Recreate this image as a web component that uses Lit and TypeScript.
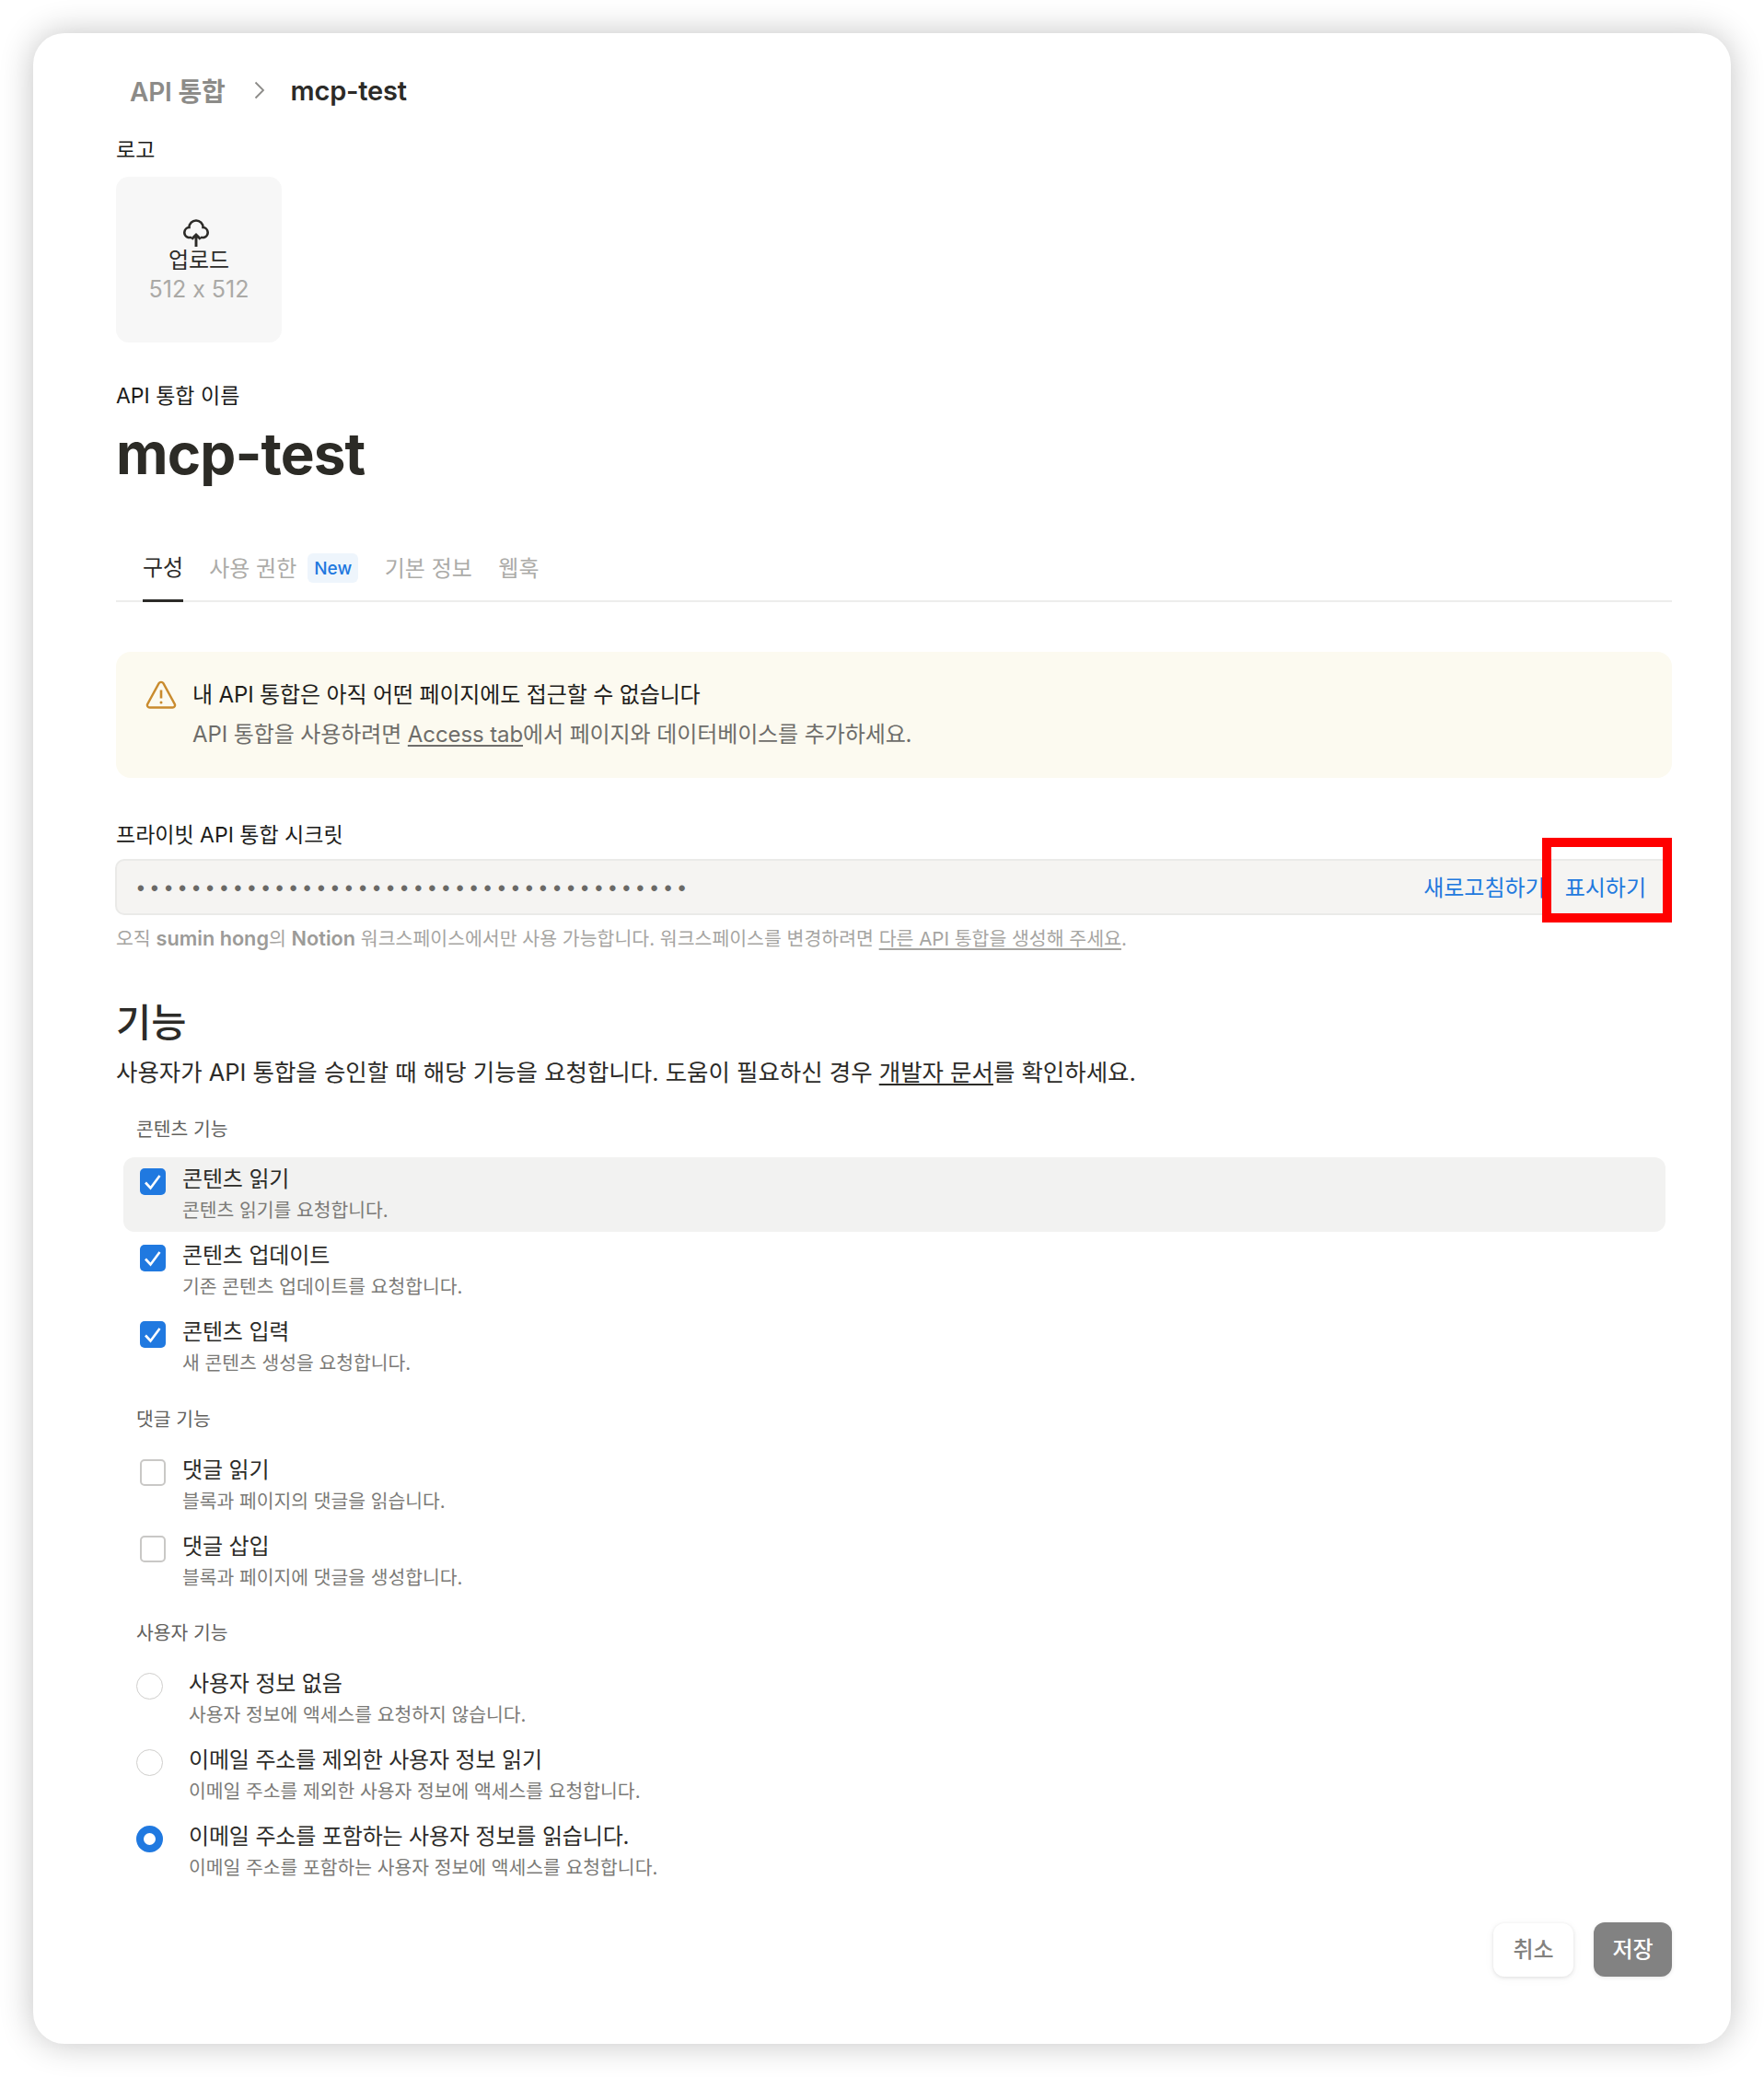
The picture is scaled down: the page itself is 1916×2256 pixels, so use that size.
import { LitElement, html, css } from "lit";
import { customElement } from "lit/decorators.js";

const check = html`<svg viewBox="0 0 28 29" width="28" height="29"><path d="M6 15.5l5.5 6L21.5 8" fill="none" stroke="#fff" stroke-width="2.6"/></svg>`;

const groups = [
  { label: "콘텐츠 기능", kind: "check", gap: "g1", items: [
    ["콘텐츠 읽기", "콘텐츠 읽기를 요청합니다.", true, true],
    ["콘텐츠 업데이트", "기존 콘텐츠 업데이트를 요청합니다.", true, false],
    ["콘텐츠 입력", "새 콘텐츠 생성을 요청합니다.", true, false],
  ]},
  { label: "댓글 기능", kind: "check", gap: "g2", items: [
    ["댓글 읽기", "블록과 페이지의 댓글을 읽습니다.", false, false],
    ["댓글 삽입", "블록과 페이지에 댓글을 생성합니다.", false, false],
  ]},
  { label: "사용자 기능", kind: "radio", gap: "g3", items: [
    ["사용자 정보 없음", "사용자 정보에 액세스를 요청하지 않습니다.", false, false],
    ["이메일 주소를 제외한 사용자 정보 읽기", "이메일 주소를 제외한 사용자 정보에 액세스를 요청합니다.", false, false],
    ["이메일 주소를 포함하는 사용자 정보를 읽습니다.", "이메일 주소를 포함하는 사용자 정보에 액세스를 요청합니다.", true, false],
  ]},
];

@customElement("app-root")
export class AppRoot extends LitElement {
  static styles = css`
    :host { display: block; width: 1916px; height: 2256px; background: #fff; overflow: hidden;
      font-family: Inter, "Noto Sans CJK KR", sans-serif; color: #2c2b28; font-feature-settings: "calt" 0; }
    * { box-sizing: border-box; }
    .page { padding: 36px; }
    .card { width: 1844px; height: 2184px; background: #fff; border-radius: 34px;
      box-shadow: 0 0 36px rgba(0,0,0,.24); padding: 42px 64px 0 90px; }
    .crumbs { display: flex; align-items: center; height: 40px; padding-left: 15px; font-size: 29px; font-weight: 600; letter-spacing: -.2px; }
    .crumbs .root { color: #8c8b88; font-size: 28px; }
    .crumbs svg { margin: 0 28px 0 31px; }
    .field { display: flex; align-items: center; height: 24px; font-size: 23px; color: #1b1b19; }
    .logo-label { margin-top: 31px; }
    .logo { margin-top: 19px; width: 180px; height: 180px; background: #f7f7f7; border-radius: 14px;
      display: flex; flex-direction: column; align-items: center; padding-top: 46px; }
    .logo svg { margin-left: -7px; }
    .logo .up { font-size: 24px; line-height: 28px; color: #2c2b28; margin-top: 1px; }
    .logo .size { font-size: 25px; line-height: 34px; color: #aaa9a6; }
    .name-label { margin-top: 44px; }
    h1 { margin: 13px 0 0; height: 80px; line-height: 80px; font-size: 62px; font-weight: 700; letter-spacing: -.9px; color: #2c2b26; }
    .tabs { margin-top: 57px; height: 64px; border-bottom: 2px solid #ededec; display: flex; padding-left: 29px; font-size: 24px; color: #acaba8; }
    .tab { height: 62px; display: flex; align-items: center; padding-bottom: 11px; margin-right: 28.5px; }
    .tab.on { color: #2c2b28; margin-right: 28px; border-bottom: 3px solid #2c2b28; height: 64px; padding-bottom: 12px; }
    .badge { margin: 3px 0 0 12px; height: 32px; padding: 0 7px; display: flex; align-items: center; background: #eef5fc; color: #1f78df; border-radius: 6px; font-size: 19px; font-weight: 500; }
    .banner { margin-top: 54px; height: 137px; background: #fcfaf0; border-radius: 16px; padding: 31px 0 0 31px; display: flex; }
    .banner svg { flex: none; margin-right: 16px; }
    .banner .t { height: 30px; line-height: 30px; font-size: 24px; color: #1e1d1b; letter-spacing: -.14px; padding-top: 1px; }
    .banner .s { height: 30px; line-height: 30px; margin-top: 14px; font-size: 24px; color: #6e6d6a; letter-spacing: -.1px; }
    .banner u, .help u, .desc u { text-underline-offset: 3px; }
    .secret-label { margin-top: 48px; }
    .input { margin: 16px 0 0 -1px; height: 61px; background: #f5f4f2; border: 2px solid #eaeae8; border-radius: 10px; display: flex; align-items: center; padding: 0 0 0 22px; position: relative; }
    .dots { flex: 1; font-size: 22px; letter-spacing: 7.37px; color: #6a6966; line-height: 1; font-weight: 700; font-family: "Liberation Sans", sans-serif; padding-top: 2px; }
    .act { color: #2279de; font-size: 24px; padding-bottom: 3px; }
    .act.a { margin-right: 21px; }
    .act.b { margin-right: 26px; }
    .mark { position: absolute; right: -2px; top: -25px; width: 141px; height: 92px; border: 10px solid #ff0000; }
    .help { margin-top: 13px; height: 24px; line-height: 24px; font-size: 20.5px; color: #a6a5a2; }
    .help b { font-weight: 600; color: #9c9b98; font-size: 21.7px; }
    h2 { margin: 55px 0 0; height: 50px; line-height: 50px; font-size: 41.5px; font-weight: 500; color: #2c2b28; }
    .desc { margin-top: 13px; height: 32px; line-height: 32px; font-size: 25.45px; color: #2c2b28; }
    .glabel { padding-left: 22px; height: 24px; line-height: 24px; font-size: 20.4px; color: #62615e; }
    .g1 { margin-top: 34px; }
    .g2 { margin-top: 26px; }
    .g3 { margin-top: 25px; }
    .rows { display: flex; flex-direction: column; gap: 2px; }
    .g1 + .rows { margin-top: 18px; }
    .g2 + .rows { margin-top: 19px; }
    .g3 + .rows { margin-top: 19px; }
    .row { height: 81px; width: 1675px; margin-left: 8px; border-radius: 12px; display: flex; padding: 12px 0 0 18px; }
    .row.hl { background: #f2f2f1; }
    .box { flex: none; width: 28px; height: 29px; border-radius: 5px; margin-right: 18px; display: block; }
    .box.on { background: #2079e0; }
    .box.off { border: 2px solid #c9c8c6; }
    .radio { flex: none; width: 29px; height: 29px; border-radius: 50%; margin: 0 28px 0 -4px; }
    .radio.off { border: 1.5px solid #cfcecc; }
    .radio.on { border: 8.5px solid #2079e0; }
    .txt { padding-top: 1px; }
    .rt { height: 22px; line-height: 22px; font-size: 24px; color: #2c2b28; letter-spacing: -.15px; }
    .rd { height: 22px; line-height: 22px; margin-top: 12px; font-size: 20.4px; color: #7b7a77; }
    .foot { margin-top: 36px; display: flex; justify-content: flex-end; align-items: flex-end; gap: 22px; }
    .btn { display: flex; align-items: center; justify-content: center; font-size: 24px; border-radius: 12px; padding-bottom: 5px; }
    .cancel { width: 87px; height: 58px; background: #fff; color: #82817e; box-shadow: 0 1px 4px rgba(0,0,0,.12), 0 2px 14px rgba(0,0,0,.03); font-weight: 500; }
    .save { width: 85px; height: 59px; background: #828282; color: #fff; box-shadow: 0 1px 4px rgba(0,0,0,.1); font-weight: 500; }
  `;

  render() {
    return html`<div class="page"><div class="card">
      <div class="crumbs"><span class="root">API 통합</span>
        <svg width="12" height="20" viewBox="0 0 12 20"><path d="M1.5 1.5L10 10l-8.5 8.5" fill="none" stroke="#8c8b88" stroke-width="1.8"/></svg>
        <span>mcp-test</span></div>
      <div class="field logo-label">로고</div>
      <div class="logo">
        <svg width="30" height="30" viewBox="0 0 30 30" fill="none" stroke="#2c2b28" stroke-width="2.6">
          <path d="M10 20H6.5A5.6 5.6 0 0 1 7.5 9A7.5 7.5 0 0 1 22.5 9A5.6 5.6 0 0 1 23.5 20H20"/>
          <path d="M15 30V17M10.2 21.8l4.8-4.8 4.8 4.8" stroke-width="2.9"/>
        </svg>
        <div class="up">업로드</div>
        <div class="size">512 x 512</div>
      </div>
      <div class="field name-label">API 통합 이름</div>
      <h1>mcp-test</h1>
      <div class="tabs">
        <div class="tab on">구성</div>
        <div class="tab">사용 권한<span class="badge">New</span></div>
        <div class="tab">기본 정보</div>
        <div class="tab">웹훅</div>
      </div>
      <div class="banner">
        <svg width="36" height="32" viewBox="0 0 36 32" fill="none" stroke="#c98b2e" stroke-width="2.4" stroke-linejoin="round">
          <path d="M15.6 3.2a2.8 2.8 0 0 1 4.8 0l12.4 22.6a2.6 2.6 0 0 1-2.4 3.7H5.6a2.6 2.6 0 0 1-2.4-3.7z"/>
          <path d="M18 10.5v9" stroke-width="2.6"/><circle cx="18" cy="24" r="1.5" fill="#c98b2e" stroke="none"/>
        </svg>
        <div>
          <div class="t">내 API 통합은 아직 어떤 페이지에도 접근할 수 없습니다</div>
          <div class="s">API 통합을 사용하려면 <u>Access tab</u>에서 페이지와 데이터베이스를 추가하세요.</div>
        </div>
      </div>
      <div class="field secret-label">프라이빗 API 통합 시크릿</div>
      <div class="input">
        <div class="dots">${"•".repeat(40)}</div>
        <span class="act a">새로고침하기</span><span class="act b">표시하기</span>
        <div class="mark"></div>
      </div>
      <div class="help">오직 <b>sumin hong</b>의 <b>Notion</b> 워크스페이스에서만 사용 가능합니다. 워크스페이스를 변경하려면 <u>다른 API 통합을 생성해 주세요</u>.</div>
      <h2>기능</h2>
      <div class="desc">사용자가 API 통합을 승인할 때 해당 기능을 요청합니다. 도움이 필요하신 경우 <u>개발자 문서</u>를 확인하세요.</div>
      ${groups.map((g) => html`
        <div class="glabel ${g.gap}">${g.label}</div>
        <div class="rows">${g.items.map(([t, d, on, hl]) => html`
          <div class="row ${hl ? "hl" : ""}">
            ${g.kind === "check"
              ? html`<span class="box ${on ? "on" : "off"}">${on ? check : ""}</span>`
              : html`<span class="radio ${on ? "on" : "off"}"></span>`}
            <div class="txt"><div class="rt">${t}</div><div class="rd">${d}</div></div>
          </div>`)}</div>`)}
      <div class="foot"><div class="btn cancel">취소</div><div class="btn save">저장</div></div>
    </div></div>`;
  }
}
